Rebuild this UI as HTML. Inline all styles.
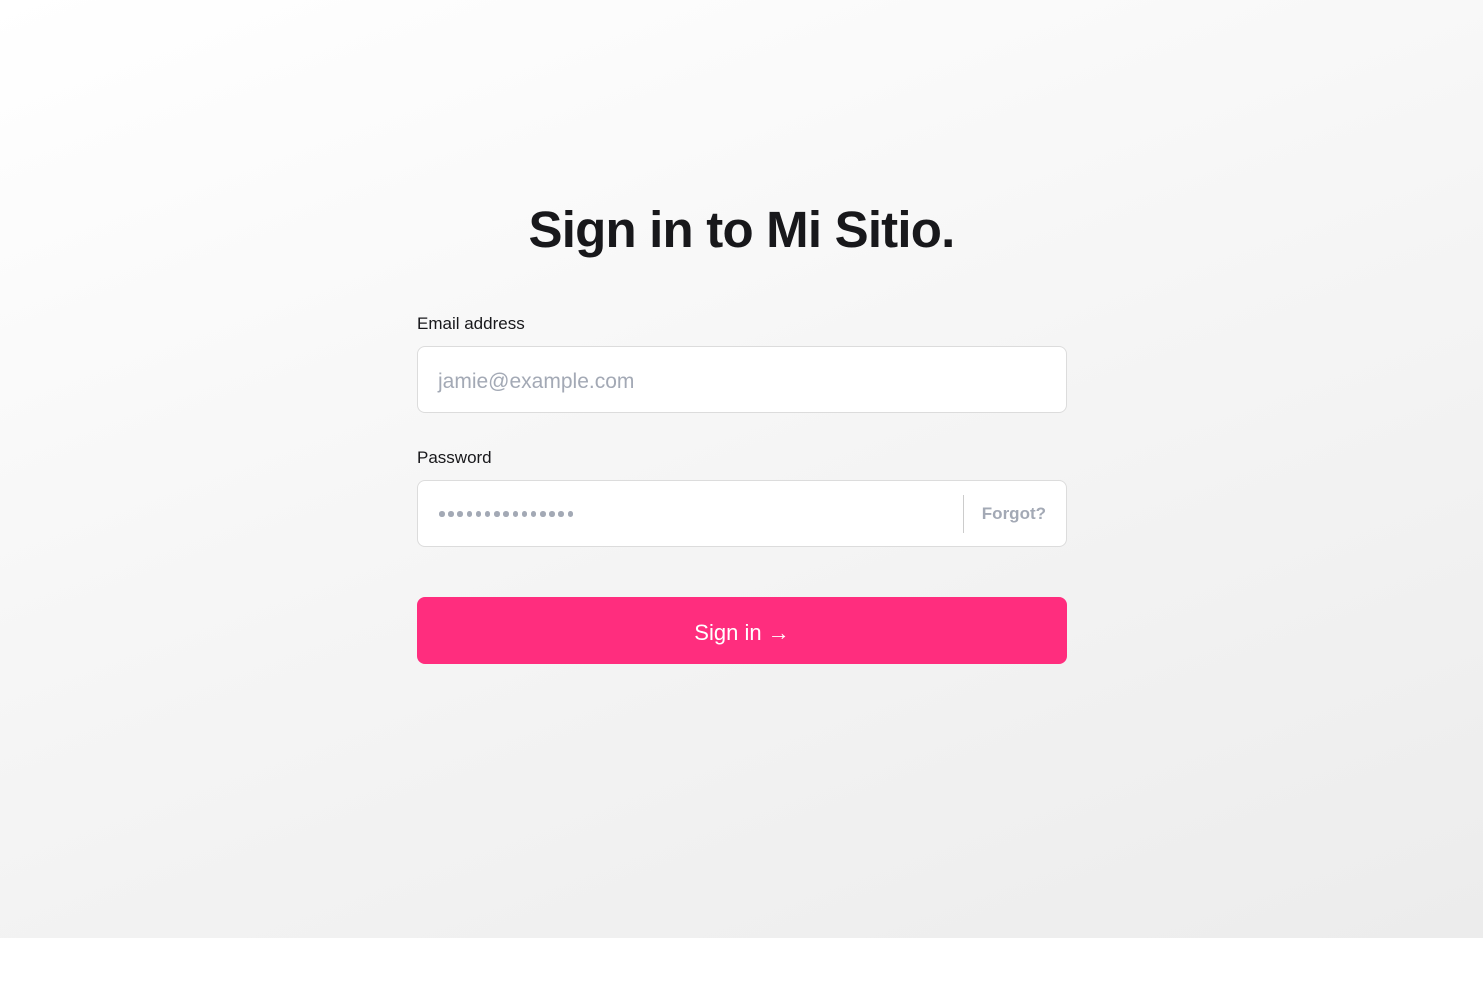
<!DOCTYPE html>
<html><head><style>
*{margin:0;padding:0;box-sizing:border-box}
body{width:1483px;height:994px;background:#fff;font-family:"Liberation Sans",sans-serif;position:relative;overflow:hidden}
.bg{position:absolute;left:0;top:0;width:1483px;height:938px;background:linear-gradient(160deg,#ffffff 0%,#f5f5f5 50%,#ececec 100%)}
h1{position:absolute;top:200px;left:0;width:1483px;text-align:center;font-size:51px;font-weight:bold;color:#18181b;letter-spacing:-0.8px}
.lbl{position:absolute;left:417px;font-size:17px;color:#18181b}
.inp{position:absolute;left:417px;width:650px;height:67px;background:#fff;border:1px solid #dcdcdc;border-radius:8px}
.ph{position:absolute;left:20px;top:23px;font-size:21px;color:#a3a9b5}
.dots{position:absolute;left:21px;top:30px;display:flex;gap:3.7px}
.dots i{display:block;width:5.5px;height:5.5px;border-radius:50%;background:#a3a9b5}
.div{position:absolute;left:545px;top:14px;width:1px;height:38px;background:#ccc}
.fg{position:absolute;right:20px;top:23px;font-size:17px;color:#a3a9b5;font-weight:bold}
.btn{position:absolute;left:417px;top:597px;width:650px;height:67px;background:#ff2d7e;border-radius:8px;color:#fff;font-size:22px;text-align:center;line-height:71px}
</style></head><body>
<div class="bg"></div>
<h1>Sign in to Mi Sitio.</h1>
<div class="lbl" style="top:314px">Email address</div>
<div class="inp" style="top:346px"><span class="ph">jamie@example.com</span></div>
<div class="lbl" style="top:448px">Password</div>
<div class="inp" style="top:480px"><span class="dots"><i></i><i></i><i></i><i></i><i></i><i></i><i></i><i></i><i></i><i></i><i></i><i></i><i></i><i></i><i></i></span><div class="div"></div><span class="fg">Forgot?</span></div>
<div class="btn">Sign in →</div>
</body></html>
